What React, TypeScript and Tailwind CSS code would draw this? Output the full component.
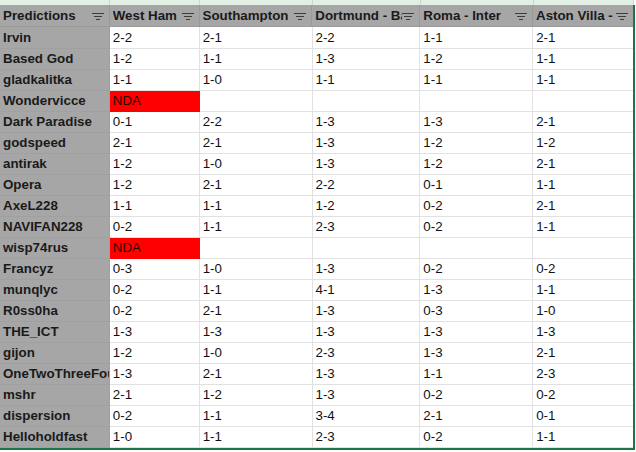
import React from "react";

const cols = [110, 90, 113, 108, 113, 100];
const headers = ["Predictions", "West Ham", "Southampton", "Dortmund - Bayern", "Roma - Inter", "Aston Villa - Chelsea"];

const rows: [string, string[] | null][] = [
  ["Irvin", ["2-2", "2-1", "2-2", "1-1", "2-1"]],
  ["Based God", ["1-2", "1-1", "1-3", "1-2", "1-1"]],
  ["gladkalitka", ["1-1", "1-0", "1-1", "1-1", "1-1"]],
  ["Wondervicce", null],
  ["Dark Paradise", ["0-1", "2-2", "1-3", "1-3", "2-1"]],
  ["godspeed", ["2-1", "2-1", "1-3", "1-2", "1-2"]],
  ["antirak", ["1-2", "1-0", "1-3", "1-2", "2-1"]],
  ["Opera", ["1-2", "2-1", "2-2", "0-1", "1-1"]],
  ["AxeL228", ["1-1", "1-1", "1-2", "0-2", "2-1"]],
  ["NAVIFAN228", ["0-2", "1-1", "2-3", "0-2", "1-1"]],
  ["wisp74rus", null],
  ["Francyz", ["0-3", "1-0", "1-3", "0-2", "0-2"]],
  ["munqlyc", ["0-2", "1-1", "4-1", "1-3", "1-1"]],
  ["R0ss0ha", ["0-2", "2-1", "1-3", "0-3", "1-0"]],
  ["THE_ICT", ["1-3", "1-3", "1-3", "1-3", "1-3"]],
  ["gijon", ["1-2", "1-0", "2-3", "1-3", "2-1"]],
  ["OneTwoThreeFour", ["1-3", "2-1", "1-3", "1-1", "2-3"]],
  ["mshr", ["2-1", "1-2", "1-3", "0-2", "0-2"]],
  ["dispersion", ["0-2", "1-1", "3-4", "2-1", "0-1"]],
  ["Helloholdfast", ["1-0", "1-1", "2-3", "0-2", "1-1"]],
];

function FilterIcon() {
  return (
    <svg width="12" height="8" viewBox="0 0 12 8" className="flex-none">
      <path d="M0 1.5H12M2 4.5H10M4 7.5H8" stroke="#3c3c3c" strokeWidth="1" fill="none" />
    </svg>
  );
}

export default function App() {
  return (
    <div
      className="w-[636px] h-[452px] bg-white overflow-hidden text-[13.33px] leading-none text-[#111]"
      style={{ fontFamily: "'Liberation Sans', Arial, sans-serif" }}
    >
      {/* top strip */}
      <div className="flex h-[5px]">
        {cols.map((w, i) => (
          <div key={i} style={{ width: w }} className="h-full bg-[#e1efe4] border-r border-[#c9d9cd]" />
        ))}
      </div>
      <div className="w-[635px] border-r-2 border-b-2 border-[#217346]">
        {/* header */}
        <div className="flex h-[22px] bg-[#a6a6a6]">
          {headers.map((h, i) => (
            <div
              key={i}
              style={{ width: cols[i] }}
              className="h-full flex items-center pl-[3px] pr-[5px] border-r border-b border-[#9a9a9a] last:border-r-0 font-bold text-[#1a1a1a]"
            >
              <span className="flex-1 overflow-hidden whitespace-nowrap [text-overflow:clip]">{h}</span>
              <FilterIcon />
            </div>
          ))}
        </div>
        {rows.map(([name, vals], r) => (
          <div key={r} className={`flex ${r === 0 ? "h-[22px]" : "h-[21px]"}`}>
            <div
              style={{ width: cols[0] }}
              className="h-full flex items-center pl-[3px] bg-[#a6a6a6] border-r border-b border-[#a0a0a0] font-bold text-[#1a1a1a] overflow-hidden whitespace-nowrap"
            >
              {name}
            </div>
            {[0, 1, 2, 3, 4].map((c) => {
              const isNda = vals === null && c === 0;
              return (
                <div
                  key={c}
                  style={{ width: cols[c + 1] }}
                  className={`h-full flex items-center pl-[3px] border-b whitespace-nowrap ${
                    c === 4 ? "" : "border-r"
                  } ${isNda ? "bg-[#ff0000] border-[#ff0000] text-[#3a0000]" : "border-[#e1e1e1]"}`}
                >
                  {isNda ? "NDA" : vals ? vals[c] : ""}
                </div>
              );
            })}
          </div>
        ))}
      </div>
    </div>
  );
}
